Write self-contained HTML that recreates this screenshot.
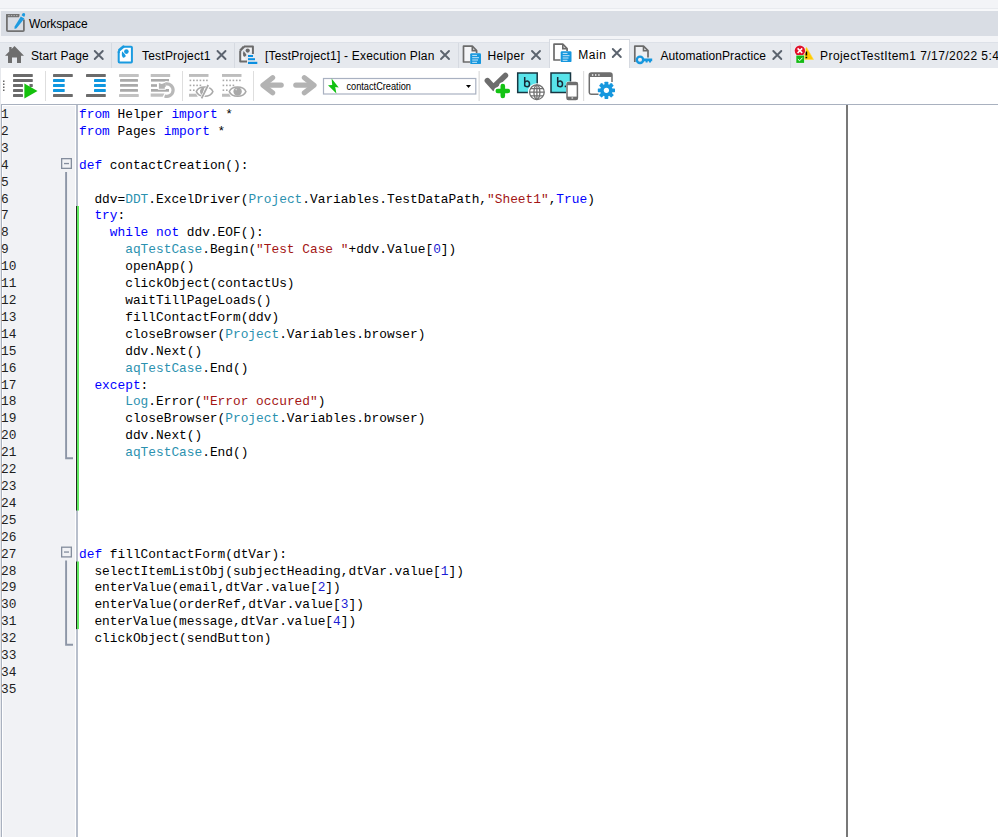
<!DOCTYPE html>
<html><head><meta charset="utf-8">
<style>
*{margin:0;padding:0;box-sizing:border-box}
html,body{width:998px;height:837px;overflow:hidden;background:#f3f4f7;font-family:"Liberation Sans",sans-serif;position:relative}
.abs{position:absolute}
#wshead{left:1px;top:11px;width:997px;height:25px;background:#d9dde4}
#wshead .t{position:absolute;left:28px;top:4.6px;letter-spacing:-0.15px;font-size:12px;color:#000;line-height:16px}
#tabs{left:0;top:42px;width:998px;height:26px;background:#e6e9ee;border-top:1px solid #dde1e8}
.tab{position:absolute;top:0;height:25px}
.tab .t{position:absolute;top:5px;font-size:12px;color:#000;line-height:16px;white-space:nowrap}
.div{position:absolute;top:0;width:1px;height:25px;background:#d6dae1}
#active{left:549px;top:39px;width:81px;height:29px;background:#fff;border:1px solid #d6dae1;border-bottom:none}
#toolbar{left:0;top:68px;width:998px;height:36px;background:#fff}
#editor{left:1px;top:104px;width:997px;height:733px;background:#fff;border-top:1px solid #a9b1bf;border-left:1px solid #a9b1bf}
#lcol{left:0;top:68px;width:1px;height:769px;background:#e6e8ec}
#gutter{left:3px;top:106px;width:72px;height:731px;background:#f1f2f5}
#gutter .wl{position:absolute;left:0;top:1px;width:1px;height:732px;background:#fff}
#gutter .wt{position:absolute;left:0;top:1px;width:75px;height:1px;background:#fff}
#gborder{left:76px;top:105px;width:2px;height:732px;background:#b8bfcc}
#margin{left:846px;top:105px;width:2px;height:732px;background:#787878}
.ln{position:absolute;left:1px;font-family:"Liberation Mono",monospace;font-size:12.83px;line-height:16.91px;color:#1e1e1e;white-space:pre}
.cl{position:absolute;left:79px;font-family:"Liberation Mono",monospace;font-size:12.83px;line-height:16.91px;color:#000;white-space:pre}
.k{color:#0000ff}.c{color:#2b91af}.s{color:#a31515}.n{color:#1c1cd4}
.green{position:absolute;left:76px;width:3px;border-left:1px solid #1f2f1f;background:#66ee66}
</style></head><body>
<div class="abs" style="left:0;top:8px;width:998px;height:1px;background:#e9ebef"></div>
<div class="abs" style="left:0;top:9px;width:998px;height:2px;background:#f7f8fa"></div>
<div id="wshead" class="abs"><div class="t">Workspace</div></div>
<svg class="abs" style="left:0;top:0" width="30" height="36" viewBox="0 0 30 36">
 <path d="M19.3 14.9 H7.8 Q6.9 14.9 6.9 15.8 V30.2 Q6.9 31.1 7.8 31.1 H23 Q23.9 31.1 23.9 30.2 V19.4" fill="none" stroke="#727272" stroke-width="1.8"/>
 <rect x="6" y="14" width="13.3" height="3.2" rx="0.6" fill="#727272"/>
 <rect x="8.3" y="15.1" width="1.3" height="1" fill="#bdbdbd"/>
 <rect x="10.9" y="15.1" width="1.3" height="1" fill="#bdbdbd"/>
 <rect x="13.5" y="15.1" width="1.3" height="1" fill="#bdbdbd"/>
 <rect x="16.1" y="15.1" width="1.3" height="1" fill="#bdbdbd"/>
 <path d="M20.8 16.4 L24.4 18.5 L16.6 28.2 L14.6 29 L14.5 26.8 Z" fill="#1e9be0"/>
 <path d="M21.6 15.2 L22.5 13.6 Q23.5 12.6 24.6 13.3 Q25.6 14.2 24.9 15.5 L24.2 16.9 Z" fill="#1e9be0"/>
</svg>

<div id="tabs" class="abs">
 <div class="div" style="left:111px"></div>
 <div class="div" style="left:234px"></div>
 <div class="div" style="left:458px"></div>
 <div class="div" style="left:790px"></div>
 <div class="tab" style="left:0"><div class="t" style="left:31px;letter-spacing:0.12px">Start Page</div></div>
 <div class="tab" style="left:0"><div class="t" style="left:142px;letter-spacing:0.22px">TestProject1</div></div>
 <div class="tab" style="left:0"><div class="t" style="left:265px;letter-spacing:0.2px">[TestProject1] - Execution Plan</div></div>
 <div class="tab" style="left:0"><div class="t" style="left:487.5px;letter-spacing:0.35px">Helper</div></div>
 <div class="tab" style="left:0"><div class="t" style="left:660.5px;letter-spacing:0.08px">AutomationPractice</div></div>
 <div class="tab" style="left:0"><div class="t" style="left:820px;letter-spacing:0.44px">ProjectTestItem1 7/17/2022 5:41 PM</div></div>
</div>
<div id="active" class="abs"><div class="t abs" style="left:28.3px;top:7px;font-size:12px;line-height:16px;color:#000;letter-spacing:0.5px">Main</div></div>
<svg class="abs" style="left:0;top:36px" width="998" height="32" viewBox="0 36 998 32">
 <!-- house -->
 <path d="M14.5 46 L24 55.8 L21 55.8 L21 63 L17 63 L17 57.5 L12 57.5 L12 63 L8 63 L8 55.8 L5 55.8 L9.2 51.5 L9.2 47 L11.6 47 L11.6 49 Z" fill="#6e6e6e"/>
 <!-- close X -->
 <g stroke="#5b636e" stroke-width="1.9" stroke-linecap="round" fill="none">
  <path d="M94.75 51.00 L102.75 59.00 M102.75 51.00 L94.75 59.00"/>
  <path d="M217.50 51.00 L225.50 59.00 M225.50 51.00 L217.50 59.00"/>
  <path d="M441.00 51.00 L449.00 59.00 M449.00 51.00 L441.00 59.00"/>
  <path d="M532.00 51.00 L540.00 59.00 M540.00 51.00 L532.00 59.00"/>
  <path d="M612.80 49.00 L620.80 57.00 M620.80 49.00 L612.80 57.00"/>
  <path d="M773.30 51.00 L781.30 59.00 M781.30 51.00 L773.30 59.00"/>
 </g>
 <!-- project icon -->
 <g>
  <path d="M123.3 46.7 H131.1 Q131.9 46.7 131.9 47.5 V61.7 Q131.9 62.5 131.1 62.5 H119.5 Q118.7 62.5 118.7 61.7 V52.2" fill="#fff" stroke="#1a9be0" stroke-width="2"/>
  <path d="M123.3 46.7 L119.4 50" stroke="#1a9be0" stroke-width="2.8" stroke-linecap="round"/>
  <circle cx="118.8" cy="52" r="1.3" fill="#1a9be0"/>
  <circle cx="126.4" cy="51.6" r="2.3" fill="#1a9be0"/>
  <path d="M122.1 51.3 Q124.6 53.8 125.9 55.9 Q124.8 57.9 123.1 57.7 Q121.7 57.1 121.8 54 Z" fill="#1a9be0"/>
 </g>
 <!-- exec plan icon -->
 <g>
  <path d="M244 46.4 H252.9 V54 M247 61.6 H240.2 V50.5" fill="#f3f4f6" stroke="#6b6b6b" stroke-width="2" stroke-linejoin="round"/>
  <path d="M240.2 50.5 L244 46.6" stroke="#6b6b6b" stroke-width="2.4"/>
  <circle cx="247.7" cy="50.6" r="2.1" fill="#6b6b6b"/>
  <path d="M243.5 51 Q245.5 53 246.5 55 Q245.5 57 244.2 56.8 Q242.8 56 243 53.5 Z" fill="#6b6b6b"/>
  <rect x="248" y="55" width="5" height="2" fill="#0b8fe0"/>
  <rect x="248" y="58.2" width="7" height="2" fill="#0b8fe0"/>
  <rect x="248" y="61.8" width="9.3" height="2.2" fill="#0b8fe0"/>
 </g>
 <!-- helper icon -->
 <g>
  <path d="M470 62 H463.5 V46.2 H472.3 L476.6 50.5 V53" fill="#f4f5f7" stroke="#6b6b6b" stroke-width="1.7" stroke-linejoin="round"/>
  <path d="M472.3 46.5 V50.6 H476.4" fill="none" stroke="#6b6b6b" stroke-width="1.6"/>
  <rect x="470.2" y="53.2" width="10.8" height="10.9" rx="1.2" fill="#1697de"/>
  <g stroke="#fff" stroke-width="0.9" opacity="0.85"><path d="M472.2 55.4 H477 M472.2 57.7 H479 M472.2 60 H478 M472.2 62.3 H477"/></g>
 </g>
 <!-- main icon -->
 <g>
  <path d="M560.5 60 H554 V44.2 H562.8 L567.1 48.5 V51" fill="#fff" stroke="#6b6b6b" stroke-width="1.7" stroke-linejoin="round"/>
  <path d="M562.8 44.5 V48.6 H566.9" fill="none" stroke="#6b6b6b" stroke-width="1.6"/>
  <rect x="560.7" y="51.2" width="10.8" height="10.9" rx="1.2" fill="#1697de"/>
  <g stroke="#fff" stroke-width="0.9" opacity="0.85"><path d="M562.7 53.4 H567.5 M562.7 55.7 H569.5 M562.7 58 H568.5 M562.7 60.3 H567.5"/></g>
 </g>
 <!-- automation practice icon -->
 <g>
  <path d="M634.8 62 V46.2 H643.5 L648 50.7 V57.5" fill="#eef0f3" stroke="#6b6b6b" stroke-width="1.7" stroke-linejoin="round"/>
  <path d="M643.5 46.5 V50.8 H647.8" fill="none" stroke="#6b6b6b" stroke-width="1.6"/>
  <circle cx="640" cy="59.8" r="3.2" fill="none" stroke="#1697de" stroke-width="2.4"/>
  <path d="M642.8 58.6 H652.2 V61.2 H651 V62.6 H649 V61.2 H647.6 V62.6 H645.6 V61.2 H642.8 Z" fill="#1697de"/>
 </g>
 <!-- results icon -->
 <g>
  <path d="M806.5 47.3 L813.5 59.5 H799.5 Z" fill="#ffcc00" stroke="#ffd84a" stroke-width="0.6" stroke-linejoin="round"/>
  <path d="M806.4 51.4 V55.5 M806.4 56.8 V58.2" stroke="#000" stroke-width="1.6"/>
  <circle cx="799.9" cy="50.7" r="5.8" fill="#f2f3f6"/>
  <circle cx="799.9" cy="50.7" r="5.2" fill="#e0102a"/>
  <path d="M797.6 48.4 L802.2 53 M802.2 48.4 L797.6 53" stroke="#fff" stroke-width="1.6"/>
  <rect x="795.8" y="55" width="8.8" height="8.4" fill="#f2f3f6"/>
  <rect x="796.3" y="55.5" width="7.8" height="7.4" fill="#14bb14"/>
  <path d="M797.9 59.2 L799.6 60.8 L802.5 57.7" fill="none" stroke="#fff" stroke-width="1"/>
 </g>
</svg>

<div id="toolbar" class="abs"><svg class="abs" style="left:0;top:0" width="998" height="36" viewBox="0 68 998 36">
 <!-- grip -->
 <g fill="#666"><rect x="3" y="80.5" width="1.5" height="1.5"/><rect x="3" y="83.5" width="1.5" height="1.5"/><rect x="3" y="86.5" width="1.5" height="1.5"/><rect x="3" y="89.5" width="1.5" height="1.5"/></g>
 <!-- run -->
 <g fill="#6b6b6b">
  <rect x="13" y="74" width="19.8" height="3" rx="0.4"/>
  <rect x="13" y="79" width="19.8" height="3" rx="0.4"/>
  <rect x="13" y="84" width="10" height="3" rx="0.4"/>
  <rect x="29.5" y="84" width="3.3" height="3" rx="0.4"/>
  <rect x="13" y="89" width="10" height="3" rx="0.4"/>
  <rect x="13" y="94" width="10" height="3" rx="0.4"/>
 </g>
 <path d="M24.4 83.5 L37.5 91 L24.4 98.6 Z" fill="#14c10c"/>
 <g fill="#dedede"><rect x="45" y="71" width="1" height="30"/><rect x="182" y="71" width="1" height="30"/><rect x="253" y="71" width="1" height="30"/><rect x="478.5" y="71" width="1.3" height="30"/><rect x="583" y="71" width="1.2" height="30"/></g>
 <!-- outdent -->
 <g fill="#6b6b6b"><rect x="53" y="74" width="19.8" height="3" rx="0.4"/><rect x="53" y="94" width="19.8" height="3" rx="0.4"/></g>
 <g fill="#0f97e0"><rect x="53" y="79" width="11.7" height="3" rx="0.4"/><rect x="53" y="84" width="11.7" height="3" rx="0.4"/><rect x="53" y="89" width="11.7" height="3" rx="0.4"/></g>
 <!-- indent -->
 <g fill="#6b6b6b"><rect x="86" y="74" width="19.8" height="3" rx="0.4"/><rect x="86" y="94" width="19.8" height="3" rx="0.4"/></g>
 <g fill="#0f97e0"><rect x="94" y="79" width="11.8" height="3" rx="0.4"/><rect x="94" y="84" width="11.8" height="3" rx="0.4"/><rect x="94" y="89" width="11.8" height="3" rx="0.4"/></g>
 <!-- comment (disabled) -->
 <g fill="#c2c2c2"><rect x="119" y="74" width="19.8" height="3" rx="0.4"/><rect x="119" y="94" width="19.8" height="3" rx="0.4"/></g>
 <g fill="#a9a9a9"><rect x="120" y="79" width="18" height="2.8" rx="0.6"/><rect x="120" y="84" width="18" height="2.8" rx="0.6"/><rect x="120" y="89" width="18" height="2.8" rx="0.6"/></g>
 <!-- uncomment (disabled) -->
 <g fill="#c0c0c0"><rect x="150.7" y="74" width="19.5" height="3" rx="0.3"/><path d="M150.7 93.4 H164.5 L162.6 96.7 H150.7 Z"/></g>
 <g fill="#a9a9a9"><rect x="151" y="79" width="18" height="2.6"/><rect x="151" y="84.2" width="6" height="2.6"/><rect x="151" y="89" width="18" height="2.7"/></g>
 <path d="M165.7 83.9 A6.3 6.3 0 1 1 164.6 96" fill="none" stroke="#fff" stroke-width="5.2"/>
 <path d="M158.9 83.1 L161.8 84 L165.8 82.4 L165.8 86.6 L164.8 87.3 L164.8 88.8 L158.9 88.8 Z" fill="#a9a9a9" stroke="#fff" stroke-width="2"/>
 <path d="M165.7 83.9 A6.3 6.3 0 1 1 164.6 96" fill="none" stroke="#b8b8b8" stroke-width="3.2"/>
 <path d="M158.9 83.1 L161.8 84 L165.8 82.4 L165.8 86.6 L164.8 87.3 L164.8 88.8 L158.9 88.8 Z" fill="#b3b3b3"/>
 <!-- hide (eye slash) -->
 <g fill="#bdbdbd"><rect x="189" y="74" width="19.5" height="2.9"/><path d="M189 93.8 H196 L197.8 96.7 H189 Z"/></g>
 <g fill="#a8a8a8">
  <rect x="189.6" y="79.6" width="1.6" height="1.6"/><rect x="193.0" y="79.6" width="1.6" height="1.6"/><rect x="196.3" y="79.6" width="1.6" height="1.6"/><rect x="199.6" y="79.6" width="1.6" height="1.6"/><rect x="202.9" y="79.6" width="1.6" height="1.6"/><rect x="206.1" y="79.6" width="1.6" height="1.6"/>
  <rect x="189.6" y="84.6" width="1.6" height="1.6"/><rect x="193.0" y="84.6" width="1.6" height="1.6"/><rect x="196.3" y="84.6" width="1.6" height="1.6"/><rect x="199.6" y="84.6" width="1.6" height="1.6"/>
  <rect x="189.6" y="89.4" width="1.6" height="1.6"/><rect x="193.0" y="89.4" width="1.6" height="1.6"/>
 </g>
 <path d="M196.3 91.6 C198.9 85.4 210.3 85.4 212.9 91.6 C210.3 97.8 198.9 97.8 196.3 91.6 Z" fill="#fff" stroke="#a9a9a9" stroke-width="1.5"/>
 <path d="M204.5 87.3 A4.2 4.2 0 0 0 202.3 95.2 Z" fill="#a9a9a9"/>
 <path d="M208.6 85.2 L201.9 98" stroke="#fff" stroke-width="3.4"/>
 <path d="M208.2 85 L201.6 98.3" stroke="#a9a9a9" stroke-width="1.8"/>
 <!-- show (eye) -->
 <g fill="#bdbdbd"><rect x="222" y="74" width="19.5" height="2.9"/><path d="M222 93.8 H229 L230.8 96.7 H222 Z"/></g>
 <g fill="#a8a8a8">
  <rect x="222.6" y="79.6" width="1.6" height="1.6"/><rect x="226.0" y="79.6" width="1.6" height="1.6"/><rect x="229.3" y="79.6" width="1.6" height="1.6"/><rect x="232.6" y="79.6" width="1.6" height="1.6"/><rect x="235.9" y="79.6" width="1.6" height="1.6"/><rect x="239.1" y="79.6" width="1.6" height="1.6"/>
  <rect x="222.6" y="84.6" width="1.6" height="1.6"/><rect x="226.0" y="84.6" width="1.6" height="1.6"/><rect x="229.3" y="84.6" width="1.6" height="1.6"/><rect x="232.6" y="84.6" width="1.6" height="1.6"/>
  <rect x="222.6" y="89.4" width="1.6" height="1.6"/><rect x="226.0" y="89.4" width="1.6" height="1.6"/>
 </g>
 <path d="M229.3 91.6 C231.9 85.4 243.3 85.4 245.9 91.6 C243.3 97.8 231.9 97.8 229.3 91.6 Z" fill="#fff" stroke="#a9a9a9" stroke-width="1.5"/>
 <circle cx="237.6" cy="91.5" r="4.2" fill="#a9a9a9"/><circle cx="236.2" cy="89.6" r="0.8" fill="#d8d8d8"/>
 <!-- back / forward -->
 <g fill="none" stroke="#b3b3b3" stroke-width="5.2" stroke-linecap="round" stroke-linejoin="round">
  <path d="M272.6 77.7 L263 85.2 L272.6 92.8"/>
  <path d="M266 85.1 H281.2"/>
  <path d="M304.4 77.7 L314 85.2 L304.4 92.8"/>
  <path d="M295.8 85.1 H311"/>
 </g>
 <!-- dropdown -->
 <rect x="323.5" y="78.5" width="152.3" height="15.5" fill="#fff" stroke="#a9b1c1" stroke-width="1.2"/>
 <path d="M331.6 78.6 L338.7 87.4 L335.2 87 L336.4 93.6 L328 85.3 L332.2 84.9 Z" fill="#12c212"/>
 <path d="M466 85 H471 L468.5 87.9 Z" fill="#000"/>
 <!-- check plus -->
 <path d="M487.4 80.6 L493.3 87.2 L505.4 75.4" fill="none" stroke="#6d6d6d" stroke-width="5.6" stroke-linecap="round" stroke-linejoin="miter"/>
 <path d="M502.8 86 V96 M497.8 91 H507.8" fill="none" stroke="#fff" stroke-width="7.5" stroke-linecap="round"/>
 <path d="M502.8 86 V96 M497.8 91 H507.8" fill="none" stroke="#14c314" stroke-width="4.6" stroke-linecap="round"/>
 <!-- b web -->
 <rect x="517.7" y="73" width="19.5" height="19.5" fill="#58e4ea" stroke="#173642" stroke-width="1.5"/>
 <path d="M524.7 77 V86.4 M524.7 82.6 Q525.8 80.8 527.4 81 Q529.5 81.4 529.5 84 Q529.5 86.8 527.2 86.8 Q525.3 86.8 524.7 85.2" fill="none" stroke="#172a38" stroke-width="1.5"/>
 <circle cx="536.9" cy="92.2" r="9" fill="#fff"/>
 <g fill="none" stroke="#707070" stroke-width="1.3">
  <circle cx="536.9" cy="92.2" r="7.3"/>
  <ellipse cx="536.9" cy="92.2" rx="3" ry="7.3"/>
  <path d="M536.9 84.9 V99.5 M529.6 92.2 H544.2 M530.6 88.6 H543.2 M530.6 95.8 H543.2"/>
 </g>
 <!-- b mobile -->
 <rect x="551" y="73" width="19.5" height="19.5" fill="#58e4ea" stroke="#173642" stroke-width="1.5"/>
 <path d="M557.7 77 V86.4 M557.7 82.6 Q558.8 80.8 560.4 81 Q562.5 81.4 562.5 84 Q562.5 86.8 560.2 86.8 Q558.3 86.8 557.7 85.2" fill="none" stroke="#172a38" stroke-width="1.5"/>
 <rect x="564.7" y="85.6" width="1.6" height="1.6" fill="#172a38"/>
 <rect x="566" y="81.6" width="12.4" height="18.8" rx="2" fill="#fff"/>
 <rect x="567" y="82.6" width="10.4" height="16.8" rx="1.5" fill="#fff" stroke="#6e6e6e" stroke-width="1.5"/>
 <rect x="567" y="82.6" width="10.4" height="2.6" fill="#6e6e6e"/>
 <rect x="567" y="96.6" width="10.4" height="2.8" fill="#6e6e6e"/>
 <rect x="571.5" y="97.5" width="1.6" height="1" fill="#fff"/>
 <!-- window gear -->
 <path d="M598.5 94.2 H591 Q589.3 94.2 589.3 92.5 V75 Q589.3 73 591.3 73 H610 Q612 73 612 75 V82" fill="none" stroke="#6e6e6e" stroke-width="1.5"/>
 <rect x="589.3" y="73" width="22.7" height="4.1" rx="1" fill="#6e6e6e"/>
 <g fill="#fff"><rect x="591.9" y="74.3" width="1.4" height="1.4"/><rect x="595" y="74.3" width="1.4" height="1.4"/><rect x="598.2" y="74.3" width="1.4" height="1.4"/></g>
 <g transform="translate(606.4 90.3)">
  <g fill="#1697de">
   <circle r="6.2"/>
   <rect x="-1.9" y="-8.6" width="3.8" height="17.2" rx="0.6"/>
   <rect x="-1.9" y="-8.6" width="3.8" height="17.2" rx="0.6" transform="rotate(45)"/>
   <rect x="-1.9" y="-8.6" width="3.8" height="17.2" rx="0.6" transform="rotate(90)"/>
   <rect x="-1.9" y="-8.6" width="3.8" height="17.2" rx="0.6" transform="rotate(135)"/>
  </g>
  <circle r="2.6" fill="#fff"/>
 </g>
 <!-- contactCreation text -->
 <text x="346.4" y="89.7" font-family="Liberation Sans" font-size="10.9" fill="#000" textLength="64.6" lengthAdjust="spacingAndGlyphs">contactCreation</text>
</svg>
</div>
<div id="editor" class="abs"></div>
<div id="gutter" class="abs"></div>
<div id="lcol" class="abs"></div>
<div id="gborder" class="abs"></div>
<div id="margin" class="abs"></div>
<svg class="abs" style="left:0;top:104px" width="80" height="733" viewBox="0 104 80 733">
 <g fill="none" stroke="#848d9d" stroke-width="1.3">
  <rect x="61.65" y="158.65" width="9.7" height="9.7"/>
  <rect x="61.65" y="547.2" width="9.7" height="9.7"/>
 </g>
 <g fill="#848d9d">
  <rect x="64" y="162.9" width="5" height="1.3"/>
  <rect x="64" y="551.4" width="5" height="1.3"/>
 </g>
 <g fill="none" stroke="#8d96a6" stroke-width="1.9">
  <path d="M66.1 172 V458.2 H73"/>
  <path d="M66.1 560.5 V644.7 H73"/>
 </g>
 <g>
  <rect x="76" y="206" width="1" height="304.5" fill="#1f2a1f"/>
  <rect x="77" y="206" width="2" height="304.5" fill="#5fe85f"/>
  <rect x="76" y="561.5" width="1" height="67.6" fill="#1f2a1f"/>
  <rect x="77" y="561.5" width="2" height="67.6" fill="#5fe85f"/>
 </g>
</svg>

<div id="code"><div class="ln" style="top:107.00px">1</div>
<div class="cl" style="top:107.00px"><span class="k">from</span> Helper <span class="k">import</span> *</div>
<div class="ln" style="top:123.91px">2</div>
<div class="cl" style="top:123.91px"><span class="k">from</span> Pages <span class="k">import</span> *</div>
<div class="ln" style="top:140.82px">3</div>
<div class="ln" style="top:157.73px">4</div>
<div class="cl" style="top:157.73px"><span class="k">def</span> contactCreation():</div>
<div class="ln" style="top:174.64px">5</div>
<div class="ln" style="top:191.55px">6</div>
<div class="cl" style="top:191.55px">  ddv=<span class="c">DDT</span>.ExcelDriver(<span class="c">Project</span>.Variables.TestDataPath,<span class="s">&quot;Sheet1&quot;</span>,<span class="k">True</span>)</div>
<div class="ln" style="top:208.46px">7</div>
<div class="cl" style="top:208.46px">  <span class="k">try</span>:</div>
<div class="ln" style="top:225.37px">8</div>
<div class="cl" style="top:225.37px">    <span class="k">while</span> <span class="k">not</span> ddv.EOF():</div>
<div class="ln" style="top:242.28px">9</div>
<div class="cl" style="top:242.28px">      <span class="c">aqTestCase</span>.Begin(<span class="s">&quot;Test Case &quot;</span>+ddv.Value[<span class="n">0</span>])</div>
<div class="ln" style="top:259.19px">10</div>
<div class="cl" style="top:259.19px">      openApp()</div>
<div class="ln" style="top:276.10px">11</div>
<div class="cl" style="top:276.10px">      clickObject(contactUs)</div>
<div class="ln" style="top:293.01px">12</div>
<div class="cl" style="top:293.01px">      waitTillPageLoads()</div>
<div class="ln" style="top:309.92px">13</div>
<div class="cl" style="top:309.92px">      fillContactForm(ddv)</div>
<div class="ln" style="top:326.83px">14</div>
<div class="cl" style="top:326.83px">      closeBrowser(<span class="c">Project</span>.Variables.browser)</div>
<div class="ln" style="top:343.74px">15</div>
<div class="cl" style="top:343.74px">      ddv.Next()</div>
<div class="ln" style="top:360.65px">16</div>
<div class="cl" style="top:360.65px">      <span class="c">aqTestCase</span>.End()</div>
<div class="ln" style="top:377.56px">17</div>
<div class="cl" style="top:377.56px">  <span class="k">except</span>:</div>
<div class="ln" style="top:394.47px">18</div>
<div class="cl" style="top:394.47px">      <span class="c">Log</span>.Error(<span class="s">&quot;Error occured&quot;</span>)</div>
<div class="ln" style="top:411.38px">19</div>
<div class="cl" style="top:411.38px">      closeBrowser(<span class="c">Project</span>.Variables.browser)</div>
<div class="ln" style="top:428.29px">20</div>
<div class="cl" style="top:428.29px">      ddv.Next()</div>
<div class="ln" style="top:445.20px">21</div>
<div class="cl" style="top:445.20px">      <span class="c">aqTestCase</span>.End()</div>
<div class="ln" style="top:462.11px">22</div>
<div class="ln" style="top:479.02px">23</div>
<div class="ln" style="top:495.93px">24</div>
<div class="ln" style="top:512.84px">25</div>
<div class="ln" style="top:529.75px">26</div>
<div class="ln" style="top:546.66px">27</div>
<div class="cl" style="top:546.66px"><span class="k">def</span> fillContactForm(dtVar):</div>
<div class="ln" style="top:563.57px">28</div>
<div class="cl" style="top:563.57px">  selectItemListObj(subjectHeading,dtVar.value[<span class="n">1</span>])</div>
<div class="ln" style="top:580.48px">29</div>
<div class="cl" style="top:580.48px">  enterValue(email,dtVar.value[<span class="n">2</span>])</div>
<div class="ln" style="top:597.39px">30</div>
<div class="cl" style="top:597.39px">  enterValue(orderRef,dtVar.value[<span class="n">3</span>])</div>
<div class="ln" style="top:614.30px">31</div>
<div class="cl" style="top:614.30px">  enterValue(message,dtVar.value[<span class="n">4</span>])</div>
<div class="ln" style="top:631.21px">32</div>
<div class="cl" style="top:631.21px">  clickObject(sendButton)</div>
<div class="ln" style="top:648.12px">33</div>
<div class="ln" style="top:665.03px">34</div>
<div class="ln" style="top:681.94px">35</div></div>
</body></html>
